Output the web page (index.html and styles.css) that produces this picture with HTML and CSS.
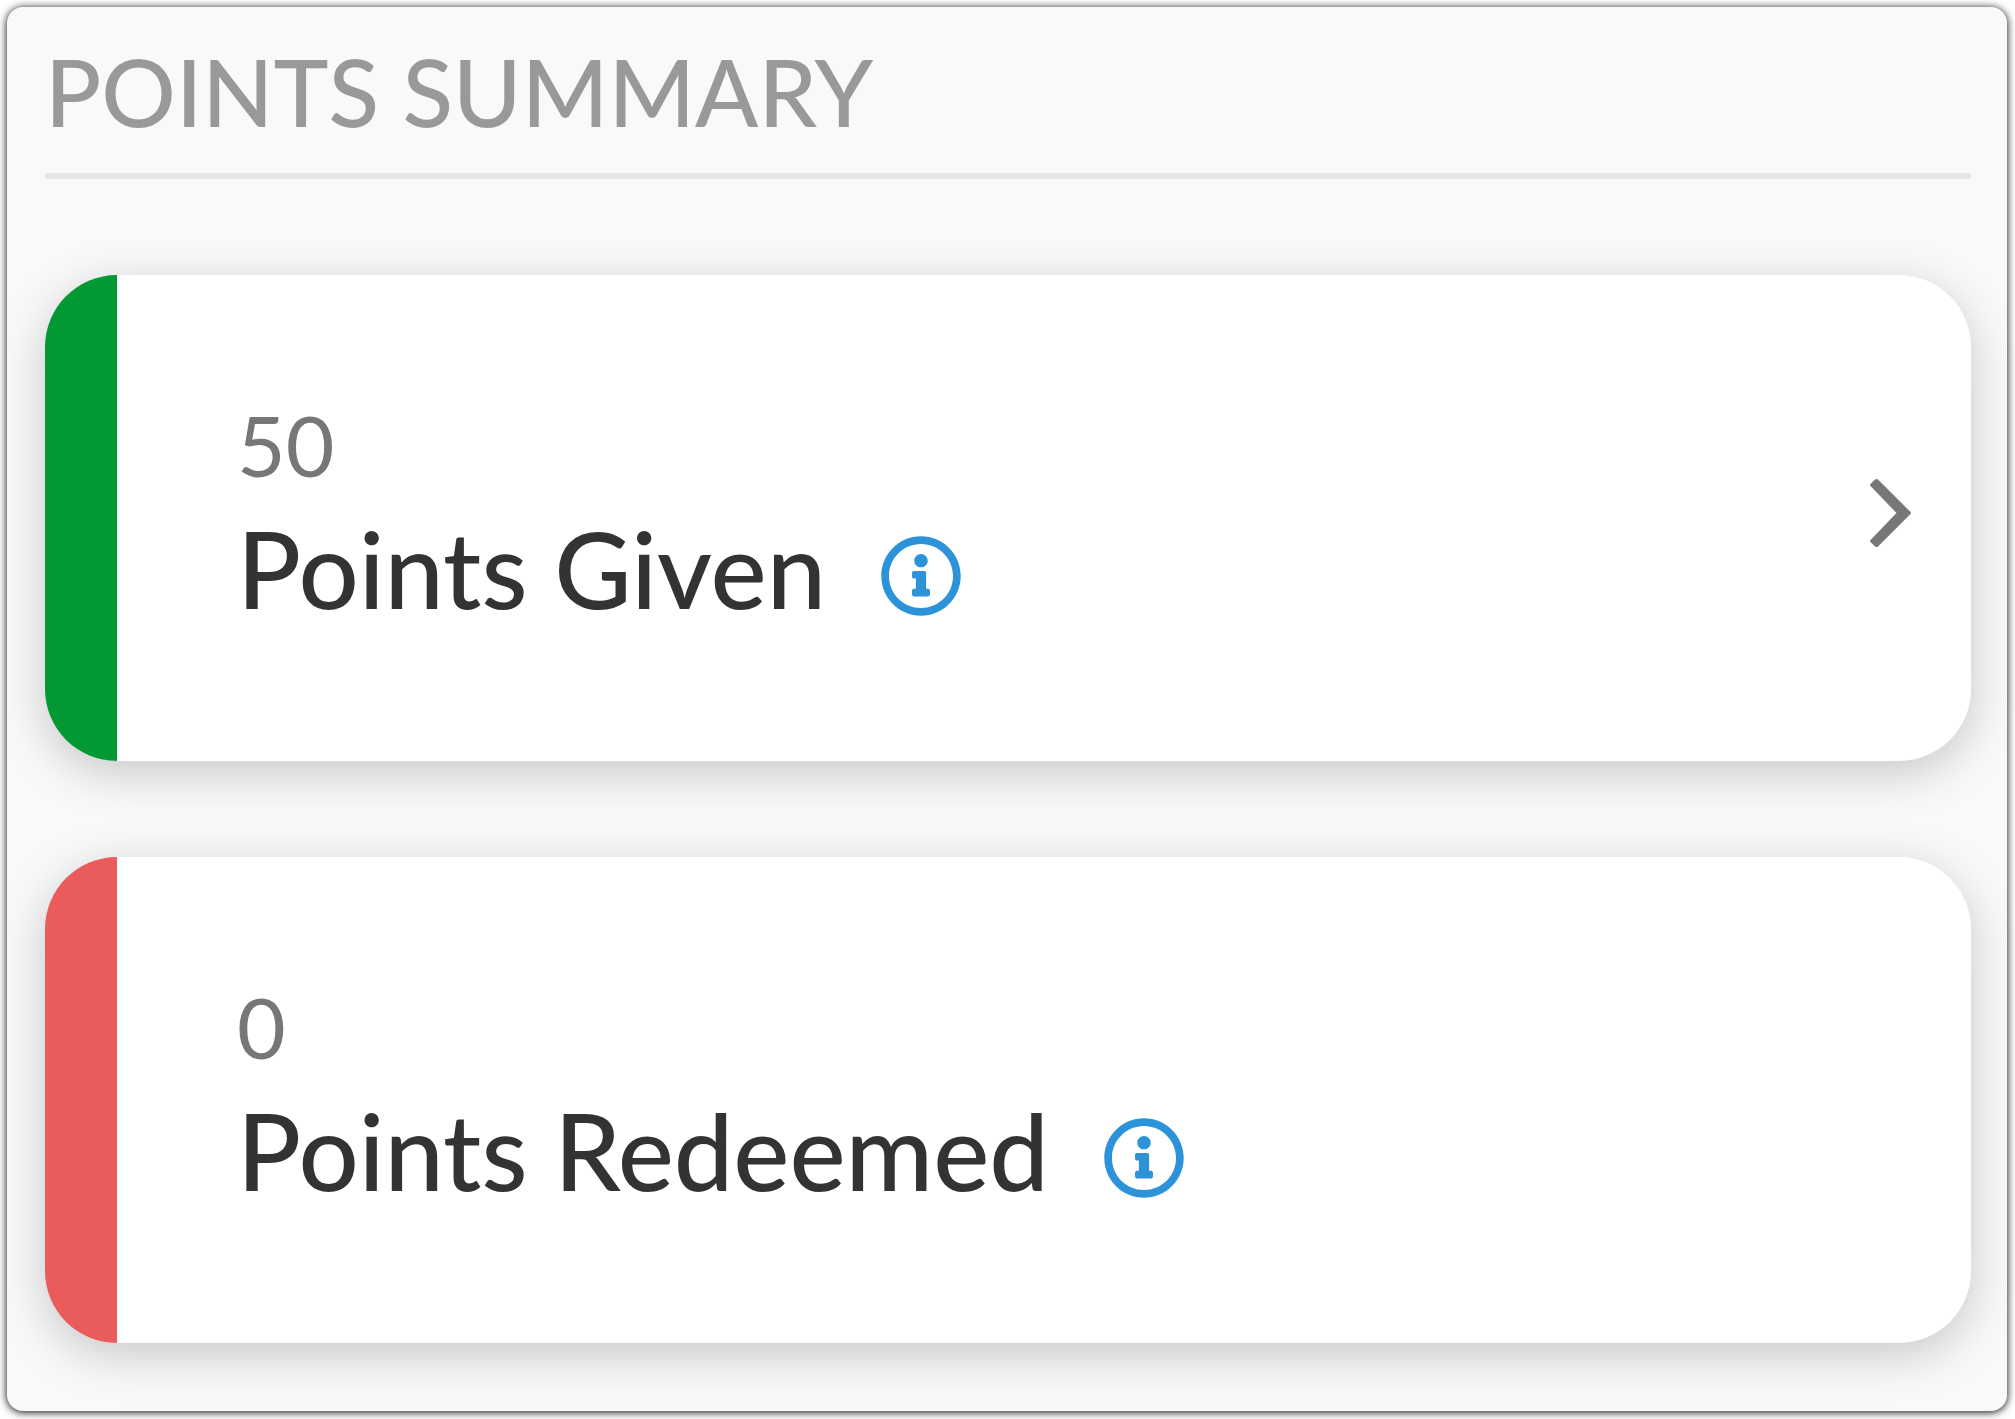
FILE: index.html
```html
<!DOCTYPE html>
<html lang="en">
  <head>
    <meta charset="UTF-8" />
    <meta name="viewport" content="width=device-width, initial-scale=1.0" />
    <title>Points Summary</title>
    <link rel="stylesheet" href="styles.css">
  </head>
  <body>
    <main class="panel">
      <h1 class="heading">POINTS SUMMARY</h1>

      <div class="cards">
        <section class="card given">
          <div class="details">
            <p class="value">50</p>
            <div class="title-row">
              <h2 class="title">Points Given</h2>
              <button class="info" type="button" aria-label="About points given">
                <svg viewBox="0 0 512 512" aria-hidden="true"><path d="M256 8C119.043 8 8 119.083 8 256c0 136.997 111.043 248 248 248s248-111.003 248-248C504 119.083 392.957 8 256 8zm0 448c-110.532 0-200-89.431-200-200 0-110.495 89.472-200 200-200 110.491 0 200 89.471 200 200 0 110.53-89.431 200-200 200zm0-338c23.196 0 42 18.804 42 42s-18.804 42-42 42-42-18.804-42-42 18.804-42 42-42zm56 254c0 6.627-5.373 12-12 12h-88c-6.627 0-12-5.373-12-12v-24c0-6.627 5.373-12 12-12h12v-64h-12c-6.627 0-12-5.373-12-12v-24c0-6.627 5.373-12 12-12h64c6.627 0 12 5.373 12 12v100h12c6.627 0 12 5.373 12 12v24z"/></svg>
              </button>
            </div>
          </div>
          <button class="open" type="button" aria-label="Show points given">
            <svg viewBox="0 0 48 72" aria-hidden="true"><path d="M3.500 9Q2.500 8 3.500 7L8 2.500Q9.500 1.500 11 2.500L43.500 35Q44.500 36 43.500 37L11 69.500Q9.500 70.500 8 69.500L3.500 65Q2.500 64 3.500 63L29.500 36Z"/></svg>
          </button>
        </section>

        <section class="card redeemed">
          <div class="details">
            <p class="value">0</p>
            <div class="title-row">
              <h2 class="title">Points Redeemed</h2>
              <button class="info" type="button" aria-label="About points redeemed">
                <svg viewBox="0 0 512 512" aria-hidden="true"><path d="M256 8C119.043 8 8 119.083 8 256c0 136.997 111.043 248 248 248s248-111.003 248-248C504 119.083 392.957 8 256 8zm0 448c-110.532 0-200-89.431-200-200 0-110.495 89.472-200 200-200 110.491 0 200 89.471 200 200 0 110.53-89.431 200-200 200zm0-338c23.196 0 42 18.804 42 42s-18.804 42-42 42-42-18.804-42-42 18.804-42 42-42zm56 254c0 6.627-5.373 12-12 12h-88c-6.627 0-12-5.373-12-12v-24c0-6.627 5.373-12 12-12h12v-64h-12c-6.627 0-12-5.373-12-12v-24c0-6.627 5.373-12 12-12h64c6.627 0 12 5.373 12 12v100h12c6.627 0 12 5.373 12 12v24z"/></svg>
              </button>
            </div>
          </div>
        </section>
      </div>
    </main>
  </body>
</html>
```
FILE: styles.css
```css
/* ---- RESET/BASIC STYLING ---- */
* {
  padding: 0;
  margin: 0;
  box-sizing: border-box;
}

body {
  padding: 7px 8px 8px 7px;
  background: white;
  font-family: Lato, "Open Sans", sans-serif;
}

button {
  border: none;
  background: none;
  cursor: pointer;
}

svg {
  display: block;
  width: 100%;
  fill: currentColor;
}

/* ---- PANEL ---- */
.panel {
  padding: 32px 36px 68px 38px;
  border-radius: 16px;
  background: #f9f9f9;
  box-shadow: 0 1px 8px black;
}

.heading {
  padding-bottom: 30px;
  border-bottom: 6px solid #e6e6e6;
  color: #999999;
  font-size: 93px;
  font-weight: 500;
  line-height: 104px;
}

/* ---- CARDS ---- */
.cards {
  display: flex;
  flex-direction: column;
  gap: 96px;
  margin-top: 96px;
}

.card {
  display: flex;
  align-items: center;
  justify-content: space-between;
  padding: 115px 56px 125px 120px;
  border-left: 72px solid;
  border-radius: 72px;
  background: white;
  box-shadow: 0 12px 48px rgba(0, 0, 0, 0.2);
}

.given {
  border-color: #029935;
}

.redeemed {
  border-color: #ea5b5b;
}

.value {
  color: #777777;
  font-size: 84px;
  line-height: 110px;
}

.title-row {
  display: flex;
  align-items: center;
  gap: 54px;
}

.title {
  color: #333333;
  font-size: 106px;
  font-weight: 500;
  line-height: 136px;
}

.info {
  width: 82px;
  padding-top: 16px;
  color: #2d93d9;
}

.open {
  width: 48px;
  color: #777777;
}
```
